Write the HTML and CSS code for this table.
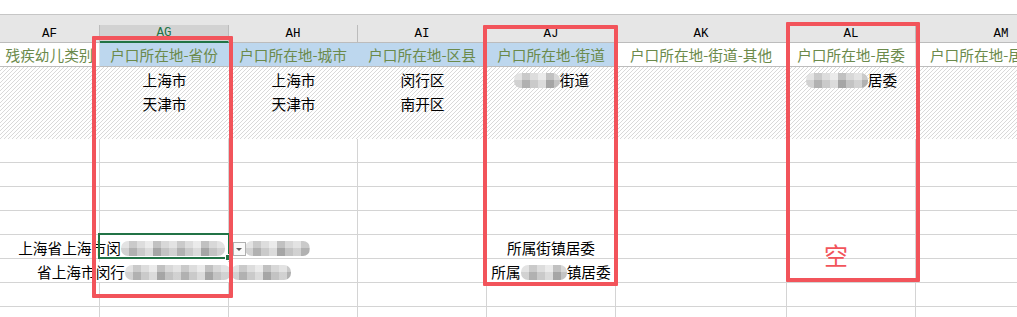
FILE: index.html
```html
<!DOCTYPE html>
<html lang="zh-CN">
<head>
<meta charset="utf-8">
<title>sheet</title>
<link rel="stylesheet" href="styles.css">
</head>
<body>
<div class="sheet">
  <div class="formula"></div>
  <div class="band"></div>

  <div class="grid colhead">
    <div class="ch">AF</div>
    <div class="ch sel">AG</div>
    <div class="ch">AH</div>
    <div class="ch">AI</div>
    <div class="ch">AJ</div>
    <div class="ch">AK</div>
    <div class="ch">AL</div>
    <div class="ch">AM</div>
  </div>

  <div class="grid fields">
    <div class="f">残疾幼儿类别</div>
    <div class="f blue">户口所在地-省份</div>
    <div class="f blue">户口所在地-城市</div>
    <div class="f blue">户口所在地-区县</div>
    <div class="f blue">户口所在地-街道</div>
    <div class="f">户口所在地-街道-其他</div>
    <div class="f">户口所在地-居委</div>
    <div class="f">户口所在地-居委-其他</div>
  </div>

  <div class="hatch">
    <div class="grid drow">
      <div class="c"></div>
      <div class="c">上海市</div>
      <div class="c">上海市</div>
      <div class="c">闵行区</div>
      <div class="c"><span><i class="mz w46"></i>街道</span></div>
      <div class="c"></div>
      <div class="c"><span><i class="mz w62"></i>居委</span></div>
      <div class="c"></div>
    </div>
    <div class="grid drow">
      <div class="c"></div>
      <div class="c">天津市</div>
      <div class="c">天津市</div>
      <div class="c">南开区</div>
      <div class="c"></div>
      <div class="c"></div>
      <div class="c"></div>
      <div class="c"></div>
    </div>
    <div class="grid drow">
      <div class="c"></div><div class="c"></div><div class="c"></div><div class="c"></div>
      <div class="c"></div><div class="c"></div><div class="c"></div><div class="c"></div>
    </div>
  </div>

  <div class="grid drow lined">
    <div class="c"></div><div class="c"></div><div class="c"></div><div class="c"></div>
    <div class="c"></div><div class="c"></div><div class="c"></div><div class="c"></div>
  </div>
  <div class="grid drow lined">
    <div class="c"></div><div class="c"></div><div class="c"></div><div class="c"></div>
    <div class="c"></div><div class="c"></div><div class="c"></div><div class="c"></div>
  </div>
  <div class="grid drow lined">
    <div class="c"></div><div class="c"></div><div class="c"></div><div class="c"></div>
    <div class="c"></div><div class="c"></div><div class="c"></div><div class="c"></div>
  </div>
  <div class="grid drow lined">
    <div class="c"></div><div class="c"></div><div class="c"></div><div class="c"></div>
    <div class="c"></div><div class="c"></div><div class="c"></div><div class="c"></div>
  </div>
  <div class="grid drow lined">
    <div class="c"></div>
    <div class="c"><span class="over">上海省上海市闵<i class="mz w104"></i><i class="gap"></i><i class="mz w65"></i></span></div>
    <div class="c"></div>
    <div class="c"></div>
    <div class="c">所属街镇居委</div>
    <div class="c"></div><div class="c"></div><div class="c"></div>
  </div>
  <div class="grid drow lined">
    <div class="c"></div>
    <div class="c"><span class="over">省上海市闵行<i class="mz w106"></i><i class="mz w60"></i></span></div>
    <div class="c"></div>
    <div class="c"></div>
    <div class="c"><span>所属<i class="mz w46"></i>镇居委</span></div>
    <div class="c"></div><div class="c"></div><div class="c"></div>
  </div>
  <div class="grid drow lined">
    <div class="c"></div><div class="c"></div><div class="c"></div><div class="c"></div>
    <div class="c"></div><div class="c"></div><div class="c"></div><div class="c"></div>
  </div>
  <div class="grid drow lined">
    <div class="c"></div><div class="c"></div><div class="c"></div><div class="c"></div>
    <div class="c"></div><div class="c"></div><div class="c"></div><div class="c"></div>
  </div>

  <div class="selbox"><span class="handle"></span></div>
  <div class="dd"></div>

  <div class="mark m1"></div>
  <div class="mark m2"></div>
  <div class="mark m3"></div>
  <div class="note">空</div>
</div>
</body>
</html>
```

FILE: styles.css
```css
html, body {
  margin: 0;
  padding: 0;
  background: #fff;
}
body {
  overflow: hidden;
  font-family: "Noto Sans CJK SC", "Noto Sans", sans-serif;
}
.sheet {
  position: relative;
  width: 1017px;
  height: 317px;
  overflow: hidden;
}
.formula {
  height: 14px;
  border-bottom: 1px solid #c6c6c6;
}
.band {
  height: 10px;
  background: #e6e6e6;
}
.grid {
  display: grid;
  grid-template-columns: 100px 129px 129px 129px 129px 171px 129px 171px;
}
.colhead {
  height: 18px;
  background: #e6e6e6;
}
.ch {
  box-sizing: border-box;
  height: 18px;
  padding-top: 1px;
  border-right: 1px solid #bcbcbc;
  border-bottom: 1px solid #bcbcbc;
  font-family: "Liberation Mono", "DejaVu Sans Mono", monospace;
  font-size: 12.5px;
  line-height: 16px;
  text-align: center;
  color: #000;
}
.ch.sel {
  background: #d2d2d2;
  border-bottom: 2px solid #217346;
  color: #217346;
  line-height: 15px;
}
.f {
  box-sizing: border-box;
  height: 24px;
  padding-top: 2px;
  border-right: 1px solid #e0e0e0;
  border-bottom: 1px solid #bdbdbd;
  font-size: 14.67px;
  line-height: 20px;
  color: #6b8a4b;
  text-align: center;
  white-space: nowrap;
  overflow: hidden;
}
.f.blue {
  background: #bdd7ee;
  border-right-color: #bdd7ee;
}
.hatch {
  background-color: #fff;
  background-image: linear-gradient(135deg, #d9d9d9 0 6%, transparent 6% 44%, #d9d9d9 44% 56%, transparent 56% 94%, #d9d9d9 94%);
  background-size: 4px 4px;
}
.c {
  box-sizing: border-box;
  height: 24px;
  padding-top: 3px;
  display: flex;
  justify-content: center;
  font-size: 14.67px;
  line-height: 20px;
  color: #000;
  white-space: nowrap;
}
.lined .c {
  border-right: 1px solid #d4d4d4;
  border-bottom: 1px solid #d4d4d4;
}
.over {
  background: #fff;
  height: 20px;
}
.mz {
  display: inline-block;
  height: 15px;
  vertical-align: -2px;
  border-radius: 7px;
  background:
    linear-gradient(180deg, rgba(255,255,255,0.25) 0 50%, rgba(0,0,0,0.04) 50% 100%),
    repeating-linear-gradient(90deg, #dadada 0 8px, #b8b8b8 8px 16px, #d2d2d2 16px 24px, #e4e4e4 24px 32px, #acacac 32px 40px, #cbcbcb 40px 48px);
  filter: blur(0.7px);
}
.w46 { width: 46px; }
.w60 { width: 60px; }
.w62 { width: 62px; }
.w65 { width: 65px; }
.w104 { width: 104px; }
.w106 { width: 106px; }
.gap {
  display: inline-block;
  width: 20px;
}
.selbox {
  position: absolute;
  left: 98px;
  top: 233px;
  width: 132px;
  height: 26px;
  box-sizing: border-box;
  border: 2px solid #217346;
}
.handle {
  position: absolute;
  right: -4px;
  bottom: -4px;
  width: 5px;
  height: 5px;
  background: #217346;
  border: 1px solid #fff;
}
.dd {
  position: absolute;
  left: 233px;
  top: 242px;
  width: 13px;
  height: 14px;
  box-sizing: border-box;
  border: 1px solid #b0b0b0;
  background: #fafafa;
}
.dd::after {
  content: "";
  position: absolute;
  left: 2px;
  top: 5px;
  border-left: 3.5px solid transparent;
  border-right: 3.5px solid transparent;
  border-top: 3.5px solid #5a5a5a;
}
.mark {
  position: absolute;
  box-sizing: border-box;
  border: 4px solid #f2545b;
  border-radius: 1px;
}
.m1 { left: 92px; top: 36px; width: 141px; height: 262px; }
.m2 { left: 483px; top: 25px; width: 135px; height: 261px; }
.m3 { left: 786px; top: 22px; width: 134px; height: 260px; }
.note {
  position: absolute;
  left: 824px;
  top: 243px;
  font-size: 24px;
  line-height: 24px;
  color: #f2545b;
}
```
